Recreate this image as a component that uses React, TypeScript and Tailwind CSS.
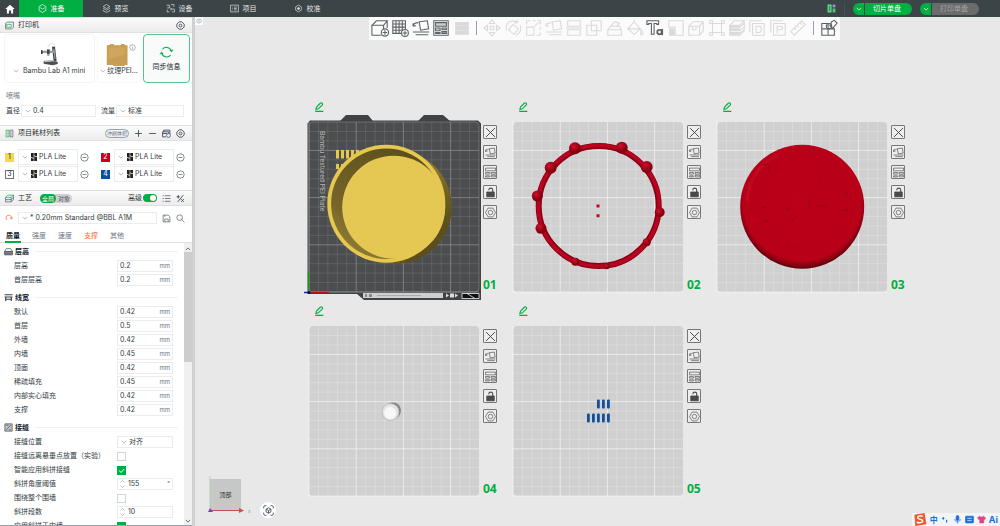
import React, { useState } from 'react';

const GREEN = '#00ae42';

interface IconProps {
    children: React.ReactNode;
    className?: string;
    box?: number;
}

function Icon({ children, className = 'size-[9px]', box = 16 }: IconProps) {
    return (
        <svg
            viewBox={`0 0 ${box} ${box}`}
            className={`shrink-0 ${className}`}
            fill="none"
            stroke="currentColor"
            strokeWidth="1.2"
            aria-hidden="true"
        >
            {children}
        </svg>
    );
}

function Chevron({ className = 'w-[6px] h-[4px] text-gray-400' }: { className?: string }) {
    return (
        <svg viewBox="0 0 8 5" className={`shrink-0 ${className}`} fill="none" stroke="currentColor" strokeWidth="1" aria-hidden="true">
            <path d="M1 1l3 3 3-3" />
        </svg>
    );
}

function Gear({ className = 'size-[9px] text-gray-700' }: { className?: string }) {
    return (
        <Icon className={className}>
            <path d="M5.500 1.500h5l4 4v5l-4 4h-5l-4-4v-5z" strokeWidth="1.500" strokeLinejoin="round" />
            <circle cx="8" cy="8" r="2.500" strokeWidth="1.500" />
        </Icon>
    );
}

const pageTabs = [
    {
        name: '准备',
        icon: <><path d="M8 1l6 3.500v7L8 15l-6-3.500v-7z" /><path d="M4 6.500L8 9l4-2.500" /></>
    },
    {
        name: '预览',
        icon: <><path d="M8 1l6 3.500L8 8 2 4.500z" /><path d="M2 7.500L8 11l6-3.500M2 10.500V12l6 3 6-3v-1.500" /></>
    },
    {
        name: '设备',
        icon: <><path d="M1 2h5v5H2M9 1h5v4M2 10v4h4M10 9h5v5h-4" /><path d="M7.500 7.500h2v3h-2" /></>
    },
    {
        name: '项目',
        icon: <><path d="M1 2h14v12H1z" /><path d="M4 5.500h1M7 5.500h5M4 8h1M7 8h5M4 10.500h1M7 10.500h5" /></>
    },
    {
        name: '校准',
        icon: <><path d="M8 2l5 3v6l-5 3-5-3V5z" /><circle cx="8" cy="8" r="1.800" fill="currentColor" /></>
    }
];

function SplitButton({ label, disabled = false }: { label: string; disabled?: boolean }) {
    return (
        <div className="flex h-3 overflow-hidden rounded-full text-white">
            <button aria-label={`${label}选项`} className="flex w-3 items-center justify-center border-r border-[#3b4446] bg-[#00ae42]">
                <Chevron className="w-[6px] h-[4px] text-white" />
            </button>
            <button
                disabled={disabled}
                className={`flex w-[47px] items-center pl-2 leading-3 ${disabled ? 'bg-[#6b6b6b] text-[#a5a5a5]' : 'bg-[#00ae42]'}`}
            >
                {label}
            </button>
        </div>
    );
}

function TopBar() {
    const [active, setActive] = useState('准备');

    return (
        <header className="flex h-[17px] shrink-0 items-center bg-[#3b4446] text-[#e4e6e6]">
            <button aria-label="主页" className="flex h-full w-[19px] items-center justify-center text-white">
                <svg viewBox="0 0 16 16" className="size-[10px]" fill="currentColor" aria-hidden="true">
                    <path d="M8 1l7.500 7H13v7H9.700v-4.500H6.300V15H3V8H.5z" />
                </svg>
            </button>
            <nav className="flex h-full">
                {pageTabs.map(tab => (
                    <button
                        key={tab.name}
                        onClick={() => setActive(tab.name)}
                        className={`flex w-16 items-center justify-center gap-1 ${active === tab.name ? 'bg-[#00ae42] text-white' : ''}`}
                    >
                        <Icon>{tab.icon}</Icon>
                        {tab.name}
                    </button>
                ))}
            </nav>
            <div className="ml-auto flex items-center gap-2 pr-[21px]">
                <svg viewBox="0 0 16 16" className="size-[9px]" aria-hidden="true">
                    <path d="M1 1h7v14H1z" fill="#7fe0a2" />
                    <path d="M3 3h3v10H3z" fill="#00ae42" />
                    <path d="M10 1h5v5h-5z" fill="#a08bd0" />
                    <path d="M10 8h5v7h-5z" fill="#4cc978" />
                </svg>
                <span className="h-3 w-px bg-[#4b5355]" />
                <SplitButton label="切片单盘" />
                <SplitButton label="打印单盘" disabled />
            </div>
        </header>
    );
}

function SectionHeader({ icon, title, children }: { icon: React.ReactNode; title: string; children?: React.ReactNode }) {
    return (
        <div className="flex h-4 shrink-0 items-center border-y border-[#e0e0e0] bg-linear-to-b from-[#fbfbfb] to-[#ececec] px-[5px]">
            <Icon className="size-[9px] text-gray-600">{icon}</Icon>
            <h2 className="ml-1 text-[#262e30]">{title}</h2>
            {children}
        </div>
    );
}

interface SelectBoxProps {
    label: string;
    options: string[];
    className?: string;
    icon?: React.ReactNode;
}

function SelectBox({ label, options, className = '', icon }: SelectBoxProps) {
    return (
        <div className={`flex items-center gap-[2px] border border-[#ececec] bg-white pl-[3px] ${className}`}>
            <Chevron />
            {icon}
            <select aria-label={label} className="h-[10px] min-w-0 flex-1 appearance-none bg-transparent leading-[10px] outline-none">
                {options.map(o => <option key={o}>{o}</option>)}
            </select>
        </div>
    );
}

function PrinterCards() {
    return (
        <div className="flex gap-[2px] pt-px pl-1">
            <div className="flex h-[49px] w-[91px] flex-col items-center justify-end rounded border border-[#f4f4f4] pb-[6px]">
                <svg viewBox="0 0 54 72" className="h-6 w-[18px]" fill="none" aria-hidden="true">
                    <path d="M21 16c1-16 22-16 21 2" stroke="#bbb" strokeWidth="1.5" />
                    <path d="M33 14h9l5 44h-9z" fill="#3f4446" />
                    <path d="M37 20h4l3 30h-4z" fill="#8b9092" />
                    <path d="M2 26h38v7H2z" fill="#9a9fa1" />
                    <path d="M18 22h8v15h-8z" fill="#44494b" />
                    <path d="M0 25h5v11H0z" fill="#383d3f" />
                    <path d="M19 37h6v5h-6z" fill="#9a9fa1" />
                    <path d="M8 57l30-1 12 4v6l-15 4-27-5z" fill="#4a4f51" />
                    <path d="M8 56l28-2 8 4-32 3z" fill="#b4b9bb" />
                </svg>
                <div className="flex items-center gap-1">
                    <Chevron />
                    <select aria-label="打印机型号" className="h-[10px] appearance-none bg-transparent leading-[10px]">
                        <option>Bambu Lab A1 mini</option>
                    </select>
                </div>
            </div>
            <div className="flex h-[49px] w-[44px] flex-col items-center justify-end rounded border border-[#f8f8f8] pb-[6px]">
                <div className="flex gap-px pl-1">
                    <svg viewBox="0 0 66 69" className="size-[22px]" aria-hidden="true">
                        <path d="M1 4l10-1 2-3h9l2 4h20l3-4h9l2 4h8v63l-8-1-2 3H22l-2-3H1z" fill="#c79d53" />
                        <path d="M7 10h52v24L7 48z" fill="#d3ac65" opacity=".6" />
                    </svg>
                    <Icon className="size-[7px] text-gray-500">
                        <circle cx="8" cy="8" r="6.500" />
                        <path d="M8 7v5M8 4v1.500" />
                    </Icon>
                </div>
                <button className="flex items-center gap-px leading-[10px]">
                    <Chevron />
                    纹理PEI...
                </button>
            </div>
            <button className="flex h-[49px] w-[47px] flex-col items-center justify-center gap-[2px] rounded border border-[#56c784] bg-[#f9fbfa] leading-3 text-gray-900">
                <svg viewBox="0 0 44 40" className="h-[14px] w-[15px]" fill="none" stroke={GREEN} strokeWidth="3" aria-hidden="true">
                    <path d="M10 12a15 15 0 0 1 26 5M34 29A15 15 0 0 1 8 23" />
                    <path d="M31 15l6 5 5-7M13 25l-6-5-5 7" fill={GREEN} strokeWidth="1" />
                </svg>
                同步信息
            </button>
        </div>
    );
}

const filaments = [
    { id: 1, swatch: 'bg-[#f4d94f] text-gray-800' },
    { id: 2, swatch: 'bg-[#c8001f] text-white' },
    { id: 3, swatch: 'border border-gray-500 bg-white text-gray-800' },
    { id: 4, swatch: 'bg-[#0a4ea6] text-white' }
];

function FilamentList() {
    return (
        <div className="grid grid-cols-[auto_auto] justify-start gap-x-3 gap-y-px px-[5px] py-2">
            {filaments.map(f => (
                <div key={f.id} className="flex items-center">
                    <button className={`flex size-[9px] items-center justify-center ${f.swatch}`}>{f.id}</button>
                    <SelectBox
                        label={`耗材${f.id}`}
                        options={['PLA Lite']}
                        className="ml-1 h-4 w-[60px]"
                        icon={
                            <svg viewBox="0 0 6 8" className="ml-px h-2 w-[6px] shrink-0" aria-hidden="true">
                                <path d="M0 0h2.700v5L0 4zM3.200 0H6v3.500L3.200 2.500zM0 4.700l2.700 1V8H0zM3.200 3.200L6 4.200V8H3.200z" fill="#222" />
                            </svg>
                        }
                    />
                    <button aria-label={`移除耗材${f.id}`} className="ml-[2px] text-gray-600">
                        <Icon><circle cx="8" cy="8" r="6.500" /><path d="M4.500 8h7" /></Icon>
                    </button>
                </div>
            ))}
        </div>
    );
}

interface Setting {
    name: string;
    value?: string;
    unit?: string;
    select?: boolean;
    spin?: boolean;
    checked?: boolean;
}

interface SettingGroup {
    title: string;
    icon: React.ReactNode;
    rows: Setting[];
}

const settingGroups: SettingGroup[] = [
    {
        title: '层高',
        icon: <><path d="M4 3h8l3 5H1z" /><path d="M1 8h14v6H1zM1 11h14" fill="#9a9a9a" /></>,
        rows: [
            { name: '层高', value: '0.2', unit: 'mm' },
            { name: '首层层高', value: '0.2', unit: 'mm' }
        ]
    },
    {
        title: '线宽',
        icon: <path d="M1 3h14M1 7h14M2 11h12M3 7v7M13 7v7" strokeWidth="2" />,
        rows: [
            { name: '默认', value: '0.42', unit: 'mm' },
            { name: '首层', value: '0.5', unit: 'mm' },
            { name: '外墙', value: '0.42', unit: 'mm' },
            { name: '内墙', value: '0.45', unit: 'mm' },
            { name: '顶面', value: '0.42', unit: 'mm' },
            { name: '稀疏填充', value: '0.45', unit: 'mm' },
            { name: '内部实心填充', value: '0.42', unit: 'mm' },
            { name: '支撑', value: '0.42', unit: 'mm' }
        ]
    },
    {
        title: '接缝',
        icon: <><path d="M1.500 1.500h13v13h-13z" fill="#c4c4c4" /><path d="M4 12l8-8M4 4h4M9 12h3" /></>,
        rows: [
            { name: '接缝位置', value: '对齐', select: true },
            { name: '接缝远离悬垂点放置（实验）', checked: false },
            { name: '智能应用斜拼接缝', checked: true },
            { name: '斜拼角度阈值', value: '155', unit: '°', spin: true },
            { name: '围绕整个围墙', checked: false },
            { name: '斜拼段数', value: '10', spin: true },
            { name: '应用斜拼于内墙', checked: true }
        ]
    }
];

function SettingControl({ row }: { row: Setting }) {
    if (row.checked !== undefined) {
        return (
            <span className="grid w-14 justify-start">
                <input
                    type="checkbox"
                    aria-label={row.name}
                    defaultChecked={row.checked}
                    className="peer col-start-1 row-start-1 size-[9px] appearance-none border border-gray-300 bg-white checked:border-[#00ae42] checked:bg-[#00ae42]"
                />
                <svg viewBox="0 0 9 9" className="pointer-events-none col-start-1 row-start-1 hidden size-[9px] peer-checked:block" fill="none" stroke="#fff" aria-hidden="true">
                    <path d="M2 4.500l2 2 3.200-3.500" />
                </svg>
            </span>
        );
    }
    if (row.select) {
        return <SelectBox label={row.name} options={[row.value || '']} className="h-3 w-14" />;
    }
    return (
        <span className="flex h-3 w-14 items-center gap-[3px] border border-[#ececec] bg-white px-[2px]">
            {row.spin && (
                <svg viewBox="0 0 5 8" className="h-2 w-[5px] shrink-0" fill="none" stroke="#9ca3af" strokeWidth=".7" aria-hidden="true">
                    <path d="M.5 2.500l2-2 2 2M.5 5.500l2 2 2-2" />
                </svg>
            )}
            <input aria-label={row.name} defaultValue={row.value} className="h-[10px] w-0 min-w-0 flex-1 bg-transparent leading-[10px] outline-none" />
            <span className="text-[6px] text-gray-500">{row.unit}</span>
        </span>
    );
}

function SettingsList() {
    return (
        <div className="flex min-h-0 flex-1 border-b border-gray-400">
            <div className="flex min-w-0 flex-1 flex-col gap-[3px] overflow-y-auto pt-px [scrollbar-width:none]">
                {settingGroups.map(group => (
                    <section key={group.title}>
                        <div className="flex h-[15px] items-center gap-[2px] pl-1 text-gray-700">
                            <Icon>{group.icon}</Icon>
                            <h3 className="font-bold text-gray-900">{group.title}</h3>
                            <span className="mr-[6px] ml-1 h-px flex-1 bg-[#f0f0f0]" />
                        </div>
                        {group.rows.map(row => (
                            <label key={row.name} className="flex h-[14px] items-center justify-between pr-[11px] pl-[14px] whitespace-nowrap">
                                {row.name}
                                <SettingControl row={row} />
                            </label>
                        ))}
                    </section>
                ))}
            </div>
            <div className="flex w-2 flex-col items-center bg-[#f0f0f0] pt-1 pb-[2px]">
                <Chevron className="w-[6px] h-[4px] rotate-180 text-gray-700" />
                <span className="mt-px h-[110px] w-full bg-[#cdcdcd]" />
                <Chevron className="mt-auto w-[6px] h-[4px] text-gray-700" />
            </div>
        </div>
    );
}

const settingTabs = ['质量', '强度', '速度', '支撑', '其他'];

function Sidebar() {
    const [tab, setTab] = useState('质量');

    return (
        <aside className="flex w-[195px] shrink-0 flex-col border-r-[3px] border-[#cfd0d0] bg-white">
            <SectionHeader icon={<><path d="M1 4l3-2h11v9l-3 3H1z" /><path d="M3 6h8v5H3z" stroke={GREEN} /></>} title="打印机">
                <button aria-label="打印机设置" className="ml-auto pr-[2px]"><Gear /></button>
            </SectionHeader>
            <PrinterCards />
            <p className="mt-2 pl-[6px] leading-[10px] text-gray-500">喷嘴</p>
            <div className="mt-1 mb-2 flex items-center gap-px px-[6px]">
                直径
                <SelectBox label="直径" options={['0.4']} className="h-3 w-[75px]" />
                <span className="ml-1">流量</span>
                <SelectBox label="流量" options={['标准']} className="h-3 w-[68px]" />
            </div>

            <SectionHeader icon={<><path d="M2 2h5v12H2z" stroke={GREEN} /><path d="M9 2h5v12H9zM4 5h1M4 8h1M4 11h1M11 5h1M11 8h1M11 11h1" /></>} title="项目耗材列表">
                <div className="ml-auto flex items-center gap-[5px] pr-[2px] text-gray-700">
                    <button className="h-[9px] rounded-full border border-gray-400 px-px text-[5px] leading-[7px] text-gray-500">冲刷体积</button>
                    <button aria-label="添加耗材"><Icon><path d="M8 2v12M2 8h12" strokeWidth="1.500" /></Icon></button>
                    <button aria-label="减少耗材"><Icon><path d="M2 8h12" strokeWidth="1.500" /></Icon></button>
                    <button aria-label="同步耗材">
                        <Icon><path d="M3 5V2h11v7M1 5h11v3M1 5v9h6M1 8h8" strokeWidth="1.500" /><circle cx="11.500" cy="11.500" r="3.500" /></Icon>
                    </button>
                    <button aria-label="耗材设置"><Gear /></button>
                </div>
            </SectionHeader>
            <FilamentList />

            <SectionHeader icon={<><path d="M5 2h10l-4 4H1z" stroke={GREEN} /><path d="M1 6v8h10l4-4V2M1 10h10l4-4M11 6v8" /></>} title="工艺">
                <div className="ml-2 flex rounded-full bg-[#cfcfcf] text-[6px] leading-[9px]">
                    <button className="rounded-full bg-[#00ae42] px-[2px] text-white">全局</button>
                    <button className="px-[2px] text-gray-600">对象</button>
                </div>
                <label className="ml-auto flex items-center gap-px">
                    高级
                    <input
                        type="checkbox"
                        defaultChecked
                        className="flex h-2 w-[14px] appearance-none items-center rounded-full bg-gray-300 px-px after:size-[6px] after:rounded-full after:bg-white checked:justify-end checked:bg-[#00ae42]"
                    />
                </label>
                <div className="ml-[5px] flex gap-[5px] pr-[2px] text-gray-700">
                    <button aria-label="参数列表"><Icon><path d="M1 3h2M5 3h10M1 8h2M5 8h10M1 13h2M5 13h10" /></Icon></button>
                    <button aria-label="比较预设"><Icon><path d="M3 14L13 2M1 5h6M4 2v6M9 9l5 5M14 9l-5 5" strokeWidth="1.500" /></Icon></button>
                </div>
            </SectionHeader>
            <div className="flex items-center pt-[6px] pr-[7px] pl-[5px]">
                <button aria-label="重置" className="text-[#f0672e]">
                    <Icon className="size-[8px]"><path d="M4 12A5.500 5.500 0 1 1 13 9M10 8l3 2 2-3" strokeWidth="1.500" /></Icon>
                </button>
                <SelectBox label="工艺预设" options={['* 0.20mm Standard @BBL A1M']} className="ml-[5px] h-3 w-[139px]" />
                <button aria-label="保存" className="ml-[5px] text-gray-600">
                    <Icon><path d="M2 2h9l3 3v9H2zM5 14V9h6v5M5 2v3" /></Icon>
                </button>
                <button aria-label="搜索" className="ml-auto text-gray-600">
                    <Icon><circle cx="6.500" cy="6.500" r="5" /><path d="M10 10l5 5" /></Icon>
                </button>
            </div>
            <div className="mt-[6px] flex gap-[10px] border-b border-[#e0e0e0] pl-[5px]">
                {settingTabs.map(t => (
                    <button
                        key={t}
                        onClick={() => setTab(t)}
                        className={`-mb-px border-b-2 px-px leading-[11px] ${tab === t ? 'border-[#00ae42] font-bold text-gray-900' : 'border-transparent'} ${t === '支撑' ? 'text-[#f0672e]' : 'text-gray-500'}`}
                    >
                        {t}
                    </button>
                ))}
            </div>
            <SettingsList />
        </aside>
    );
}

const arrangeIcon = <><path d="M8 3l9-1 1.500 9-9 1.500z" /><path d="M1 8c1-3 3-4 6-4M1 8l.5-3.500M1 8l3.500-.5M1 14.500h18M4 17.500h14" /></>;
const layoutIcon = <><path d="M2 2h16v16H2z" /><path d="M4 4h12v4H4zM4 10h5v3H4zM4 15h5v1H4zM11 10h5v2h-5zM11 14h5v2h-5z" fill="currentColor" fillOpacity=".3" /></>;

interface Tool {
    name: string;
    enabled?: boolean;
    icon?: React.ReactNode;
}

const tools: Tool[] = [
    { name: '添加', enabled: true, icon: <><path d="M1 7l5-5h12l-4 5zM1 7v11h11M14 7v5M18 2v8" /><circle cx="15.500" cy="15" r="4" fill="#fff" /><path d="M15.500 12.500v5M13 15h5" /></> },
    { name: '添加盘', enabled: true, icon: <><path d="M2 2h14v14H2zM5.500 2v14M9 2v14M12.500 2v14M2 5.500h14M2 9h14M2 12.500h14" /><circle cx="15.500" cy="15.500" r="3.800" fill="#fff" /><path d="M15.500 13v5M13 15.500h5" /></> },
    { name: '自动朝向', enabled: true, icon: arrangeIcon },
    { name: '自动摆放', enabled: true, icon: layoutIcon },
    { name: '合并', icon: <path d="M3 4h14v3H3zM3 8.500h14v3H3zM3 13h14v4H3z" fill="currentColor" /> },
    { name: '-1' },
    { name: '移动', icon: <path d="M10 1l3 4H7zM10 19l3-4H7zM1 10l4-3v6zM19 10l-4-3v6zM8 8h4v4H8z" /> },
    { name: '旋转', icon: <><path d="M10 6l6 5-5 6-6-5z" /><path d="M3 13C0 5 8-1 15 4M15 4l-4 .5M15 4l-.5-3M18 7c2 6-1 9-5 11" /></> },
    { name: '缩放', icon: <><path d="M3 9h8v9H3z" /><path d="M3 6V2h4M10 2h3M15 2h3v4M18 9v3M18 15v3h-4M12 8l4-4" /></> },
    { name: '放平', icon: arrangeIcon },
    { name: '切割', icon: <path d="M3 2h14v6H3zM3 12h14v6H3zM1 10h18" /> },
    { name: '布尔', icon: <path d="M2 7h11v11H2zM7 2h11v11H7z" /> },
    { name: '支撑', icon: <path d="M2 12h15v6H2zM2 12l3-4h10l2 4M5 8l5-5 5 2-3 3" /> },
    { name: '上色', icon: <><path d="M2 11l7-8 7 8-7 6zM2 11h14M9 3V1" /><path d="M17 12l2 4-2 2-1-2z" /></> },
    { name: '文字', enabled: true, icon: <><path d="M1 2h13v4h-2V5H9v12H6V5H3v1H1z" /><circle cx="15" cy="14.500" r="2.500" strokeWidth="2" /><path d="M18 11v7" strokeWidth="2" /></> },
    { name: '接缝', icon: <><path d="M2 2h16v16H9V9H2z" /><path d="M3 11h5v7H3z" fill="currentColor" /></> },
    { name: '方块', icon: <path d="M2 8l5-5h11v10l-4 5H2zM2 8h12v10M14 8l4-5M6 8v4h4V8" /> },
    { name: '网格', icon: <path d="M5 5h10v10H5zM2 2h3v3H2zM15 2h3v3h-3zM2 15h3v3H2zM15 15h3v3h-3z" /> },
    { name: '层编辑', icon: <><path d="M2 7l5-5h11v11l-5 5H2zM13 7l5-5" /><path d="M2 7h11v2H2zM2 11h11v2H2zM2 15h11v2H2zM13 9l5-4M13 13l5-4M13 16l5-4" fill="currentColor" /></> },
    { name: '拆分对象', icon: <path d="M5 5h13v13H5zM2 15V2h13M9 8h3c4 0 4 7 0 7H9z" /> },
    { name: '拆分零件', icon: <path d="M5 5h13v13H5zM2 15V2h13M9 16V8h3c4 0 4 4 0 4H9" /> },
    { name: '测量', icon: <path d="M2 14L14 2l4 4L6 18zM6 10l2 2M9 7l2 2M12 4l2 2" /> },
    { name: '-2' },
    { name: '装配', enabled: true, icon: <><path d="M2 5h7v6H2zM2 11v7h7v-7zM9 11h7v7H9" /><circle cx="10" cy="8" r="3" /><path d="M13 3l3-1.500 3 3-5 6-3-3z" /></> }
];

function ToolBar() {
    return (
        <div className="flex w-[471px] items-center justify-between bg-[#fbfbfb] px-[2px] pt-[2px] pb-[3px]">
            {tools.map(tool => tool.icon ? (
                <button key={tool.name} aria-label={tool.name} className={tool.enabled ? 'text-[#5c6365]' : 'text-[#dadada]'}>
                    <Icon box={20} className="size-[18px]">{tool.icon}</Icon>
                </button>
            ) : (
                <span key={tool.name} className="flex w-2 justify-center">
                    <span className="h-[14px] w-px bg-gray-400" />
                </span>
            ))}
        </div>
    );
}

// 180mm bed drawn at 170 units, one grid cell is 10mm
function PlateGrid({ dark = false }: { dark?: boolean }) {
    const cells = Array.from({ length: 18 }, (_, i) => i);
    return (
        <g stroke={dark ? '#a5a5a5' : '#ffffff'}>
            {cells.map(i => (
                <path
                    key={i}
                    d={`M${i * 9.44} 0V170M0 ${170 - i * 9.44}H170`}
                    strokeWidth={i % 5 === 0 ? 0.8 : 0.6}
                    opacity={i % 5 === 0 ? 0.7 : 0.35}
                />
            ))}
        </g>
    );
}

function YellowBox() {
    return (
        <>
            <path d="M31-1l6-6h22l5 6zM109-1l6-6h19l7 6z" fill="#3f4344" />
            <path d="M1-1.500h168l3 3V178H55l-7-6H-1.500V1.500z" fill="#3f4344" />
            <rect x="0" y="0" width="170" height="170" rx="4" fill="#4b4d4e" />
            <PlateGrid dark />
            <rect x="0" y="0" width="170" height="170" rx="4" fill="none" stroke="#8a8a8a" strokeWidth=".6" />
            <rect x="54" y="171" width="80" height="5" fill="#cfcfcf" />
            <path d="M56 172h2v3h-2zM60 172h3v3h-3z" fill="#888" />
            <path d="M68 173.500h44" stroke="#aaa" />
            <path d="M137 171.500l3 2-3 2zM141 171.500h4v4h-4zM146 171.500l3 2-3 2z" fill="#ddd" />
            <path d="M153 171.500h17v5h-17zM158 171.500l8 5" fill="#111" stroke="#eee" strokeWidth=".8" />
            <text x="9" y="-11" transform="rotate(90)" fontSize="7" fill="#b5b5b5" fontFamily="Roboto, sans-serif">Bambu Textured PEI Plate</text>
            <g fill="#e6c84f">
                {[27, 32, 37, 42, 47].map(x => <rect key={x} x={x} y="28" width="3" height="8.500" />)}
                <rect x="27" y="42" width="3" height="5" />
                <rect x="32" y="42" width="3" height="5" />
            </g>
            <circle cx="86" cy="85" r="56.800" fill="url(#side)" />
            <circle cx="77.300" cy="81.700" r="59" fill="#e6c84f" />
            <circle cx="77.300" cy="81.700" r="55.200" fill="url(#wall)" />
            <circle cx="84.700" cy="85.200" r="51.500" fill="#e5c853" />
            <path d="M-.5 170v-20" stroke="#12a012" strokeWidth="1.200" />
            <path d="M0 170.500h20" stroke="#b01818" strokeWidth="1.200" />
            <path d="M0 170.500h-5" stroke="#2020b0" strokeWidth="1.500" />
            <circle cx="0" cy="170.500" r="1.500" fill="#111" />
        </>
    );
}

const ringBumps = [
    [62, 26.3, 6], [108.7, 25.7, 6], [37.7, 45.7, 6], [133.7, 45, 6], [24.3, 74, 5.5],
    [146.7, 90.3, 5], [28, 106.3, 5.5], [133.7, 120.3, 4], [62.3, 139.7, 4], [93.7, 144.3, 3]
];

function RedRing() {
    return (
        <>
            <circle cx="85.700" cy="84" r="60" fill="none" stroke="#8c0014" strokeWidth="6" />
            <circle cx="85.700" cy="83.700" r="60.500" fill="none" stroke="#b80420" strokeWidth="3.500" />
            {ringBumps.map(([x, y, r]) => <circle key={x} cx={x} cy={y} r={r} fill="url(#bump)" />)}
            <path d="M83.500 82.500h3v3h-3zM83.500 92.200h3v3h-3z" fill="#c40420" />
        </>
    );
}

function RedDisc() {
    return (
        <>
            <circle cx="85.200" cy="84.800" r="62" fill="url(#disc)" />
            <path d="M30 78c2-22 14-37 30-44" fill="none" stroke="#d8213a" strokeWidth="3" strokeLinecap="round" opacity=".25" />
            <g fill="none" stroke="#7a0614" strokeWidth=".8" opacity=".7">
                <path d="M46 43c5-3 8 2 5 7M72 55l2 2M90 79c4 0 4 4 1 6M128 72l4-2M127 88h4M44 86l5-1M68 86l4 2M74 100l6-6M68 125l4-2M102 58l1 3M98 84h12M46 99h5" />
            </g>
        </>
    );
}

function WhiteCap() {
    return (
        <>
            <circle cx="84" cy="84.500" r="8" fill="#858585" />
            <circle cx="81.500" cy="86" r="8.800" fill="#b9b9b9" />
            <circle cx="81.500" cy="86" r="8" fill="#e4e4e4" />
            <circle cx="81" cy="87" r="6" fill="#f8f8f8" />
        </>
    );
}

function BlueBars() {
    return (
        <g fill="#124f9c">
            {[84, 89, 94].map(x => <rect key={x} x={x} y="73.500" width="2.800" height="9" rx="1" />)}
            {[74, 79, 84, 89, 94].map(x => <rect key={x} x={x} y="87.500" width="2.800" height="9" rx="1" />)}
        </g>
    );
}

const plateTools = [
    { name: '删除', icon: <path d="M2 2l16 16M18 2L2 18" strokeWidth="1.800" /> },
    { name: '朝向', icon: arrangeIcon },
    { name: '摆放', icon: <path d="M1 2h18v5H1zM1 10h7v3H1zM1 16h7v2H1zM11 10h8v3h-8zM11 15h8v3h-8z" /> },
    { name: '锁定', icon: <><path d="M3 9h14v9H3z" fill="currentColor" /><path d="M7 6V5c0-4 7-4 7 0v4" strokeWidth="2" /></> },
    { name: '设置', icon: <><path d="M5.500 2h9l4.500 8-4.500 8h-9L1 10z" /><circle cx="10" cy="10" r="4" /></> }
];

const plates = [
    { id: '01', model: <YellowBox />, dark: true },
    { id: '02', model: <RedRing /> },
    { id: '03', model: <RedDisc /> },
    { id: '04', model: <WhiteCap /> },
    { id: '05', model: <BlueBars /> }
];

function Plate({ id, model, dark }: { id: string; model: React.ReactNode; dark?: boolean }) {
    return (
        <div>
            <button aria-label={`重命名 ${id}`} className="ml-[5px] block text-[#00ae42]">
                <Icon className="size-[10px]">
                    <path d="M2 15h13M3 12l1-4 6-6c2-2 5 1 3 3l-6 6z" strokeWidth="1.700" />
                </Icon>
            </button>
            <div className="mt-[10px] flex gap-1">
                <svg viewBox="0 0 170 170" className="size-[170px] overflow-visible" aria-hidden="true">
                    {!dark && <rect width="170" height="170" rx="4" fill="#d0d0d0" />}
                    {!dark && <PlateGrid />}
                    {model}
                </svg>
                <div className="flex w-[15px] flex-col gap-[6px] pt-[3px]">
                    {plateTools.map(tool => (
                        <button key={tool.name} aria-label={tool.name} className="flex size-[14px] items-center justify-center rounded-[1px] border border-[#777] bg-[#eee] text-[#4a4a4a]">
                            <Icon box={20} className="size-[11px]">{tool.icon}</Icon>
                        </button>
                    ))}
                    <span className="mt-auto font-['Noto_Sans',sans-serif] text-xs leading-[14px] font-bold text-[#00ae42]">{id}</span>
                </div>
            </div>
        </div>
    );
}

function Gizmo() {
    return (
        <div className="absolute bottom-2 left-[13px] flex items-end gap-2">
            <svg viewBox="0 0 44 44" className="size-11" aria-hidden="true">
                <path d="M2 5h31v31H2z" fill="#c6c8c7" />
                <path d="M2 36V2" stroke="#b5cdb5" />
                <path d="M2 36.500h30" stroke="#c85050" />
                <path d="M31 34l5 2.500-5 2.500z" fill="#c85050" />
                <path d="M0 38l2-4 3 4z" fill="#5555b0" />
                <text x="11.500" y="23" fontSize="6" fill="#333">顶部</text>
                <text x="40" y="39" fontSize="5" fill="#999">x</text>
            </svg>
            <button aria-label="视角" className="flex size-4 items-center justify-center rounded-full bg-white text-gray-700">
                <Icon className="size-[11px]">
                    <path d="M1 5V3q0-2 2-2h2M11 1h2q2 0 2 2v2M15 11v2q0 2-2 2h-2M5 15H3q-2 0-2-2v-2" />
                    <path d="M8 4l3.500 2v4L8 12l-3.500-2V6zM4.500 6L8 8l3.500-2M8 8v4" />
                </Icon>
            </button>
        </div>
    );
}

function ImeBar() {
    return (
        <div className="absolute right-0 bottom-0 flex h-[13px] items-center gap-[3px] bg-[#f2f4f8] pr-[2px] text-[#1a6fe0]">
            <svg viewBox="0 0 15 14" className="h-[13px] w-[15px]" aria-hidden="true">
                <path d="M2 2l11-2 2 12-12 2z" fill="#f05a28" />
                <path d="M11 3.500c-3-1-6 0-5.500 1.800S11 6.500 11 8.500s-4 2.500-6.500 1.500" fill="none" stroke="#fff" strokeWidth="1.600" />
            </svg>
            <span className="text-[8px] font-bold">中</span>
            <Icon><circle cx="4" cy="6" r="1.500" fill="currentColor" /><path d="M9 9c2 1 2 3 0 4" strokeWidth="2" /></Icon>
            <Icon><rect x="5.500" y="1" width="5" height="9" rx="2.500" fill="currentColor" /><path d="M3 7c0 7 10 7 10 0M8 12v3" /></Icon>
            <Icon><rect x="1" y="2" width="14" height="12" rx="1" fill="currentColor" /><path d="M4 6h8M4 10h8" stroke="#fff" /></Icon>
            <Icon className="size-[9px] text-[#e0457b]"><path d="M5 2L1 5l2 3 2-1v7h7V7l2 1 1-3-4-3c-1 2-5 2-6 0z" fill="currentColor" /></Icon>
            <span className="text-[9px] font-bold">Ai</span>
        </div>
    );
}

export default function App() {
    return (
        <div className="flex h-screen flex-col overflow-hidden font-['Inter','Noto_Sans_CJK_SC',sans-serif] text-[7px] leading-[10px] text-[#333b3d]">
            <TopBar />
            <div className="flex min-h-0 flex-1">
                <Sidebar />
                <main className="relative min-w-0 flex-1 bg-[#e8e8e8]">
                    <div className="flex items-start">
                        <button aria-label="收起侧栏" className="flex size-2 items-center justify-center bg-white text-gray-400">
                            <Icon className="size-[6px]"><path d="M1 8l4-5h6l4 5-4 5H5zM5 8h6" strokeWidth="2" /></Icon>
                        </button>
                        <div className="flex flex-1 justify-center pl-[6px]">
                            <ToolBar />
                        </div>
                    </div>
                    <div className="grid grid-cols-[repeat(3,auto)] justify-center gap-x-[15px] gap-y-[14px] pt-[62px] pl-5">
                        {plates.map(p => <Plate key={p.id} {...p} />)}
                    </div>
                    <Gizmo />
                    <ImeBar />
                </main>
            </div>
            <svg className="absolute size-0" aria-hidden="true">
                <defs>
                    <linearGradient id="side" x1="0" y1="0" x2="1" y2="1">
                        <stop offset=".3" stopColor="#a8923a" />
                        <stop offset=".8" stopColor="#5c4f1c" />
                    </linearGradient>
                    <linearGradient id="wall" x1=".7" y1="0" x2="0" y2="1">
                        <stop offset="0" stopColor="#5a4e1b" />
                        <stop offset=".65" stopColor="#75652a" />
                        <stop offset="1" stopColor="#a08b38" />
                    </linearGradient>
                    <radialGradient id="bump" cx=".4" cy=".35">
                        <stop offset="0" stopColor="#d4102c" />
                        <stop offset="1" stopColor="#85000f" />
                    </radialGradient>
                    <radialGradient id="disc" cx=".5" cy=".46" r=".54">
                        <stop offset="0" stopColor="#bb0019" />
                        <stop offset=".88" stopColor="#b80018" />
                        <stop offset="1" stopColor="#5e000c" />
                    </radialGradient>
                </defs>
            </svg>
        </div>
    );
}
